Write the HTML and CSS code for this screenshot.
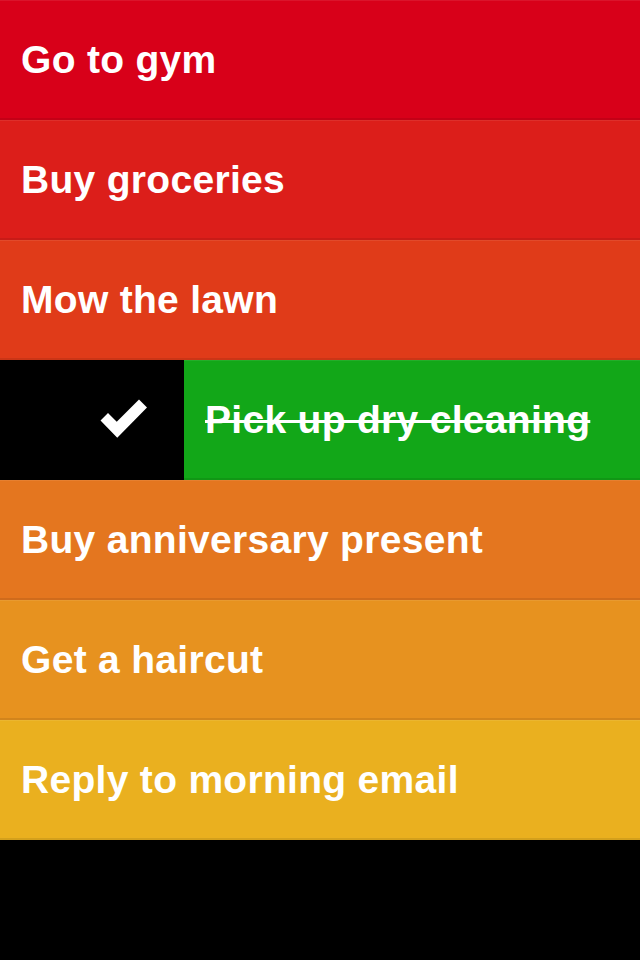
FILE: index.html
```
<!DOCTYPE html>
<html lang="en">
<head>
<meta charset="utf-8">
<title>Tasks</title>
<link rel="stylesheet" href="styles.css">
</head>
<body>
<ul class="list">
  <li class="item c1"><span class="label">Go to gym</span></li>
  <li class="item c2"><span class="label">Buy groceries</span></li>
  <li class="item c3"><span class="label">Mow the lawn</span></li>
  <li class="swipe">
    <div class="reveal">
      <svg class="check" width="50" height="42" viewBox="100 398 50 42" aria-hidden="true">
        <polygon points="101.5,420.5 109,413 117.75,421.75 140,399.5 148,407.5 118.25,437.75" fill="#fff"/>
      </svg>
    </div>
    <div class="item done"><span class="label">Pick up dry cleaning</span></div>
  </li>
  <li class="item c5"><span class="label">Buy anniversary present</span></li>
  <li class="item c6"><span class="label">Get a haircut</span></li>
  <li class="item c7"><span class="label">Reply to morning email</span></li>
</ul>
</body>
</html>
```
FILE: styles.css
```
html, body {
  margin: 0;
  padding: 0;
  background: #000;
}
body {
  width: 640px;
  height: 960px;
  overflow: hidden;
  font-family: "Liberation Sans", Arial, Helvetica, sans-serif;
}
.list {
  list-style: none;
  margin: 0;
  padding: 0;
}
.item {
  height: 120px;
  display: flex;
  align-items: center;
  padding-left: 21px;
  box-sizing: border-box;
  color: #fff;
  box-shadow: inset 0 1px 0 rgba(255,255,255,0.08), inset 0 -2px 0 rgba(0,0,0,0.09);
}
.label {
  font-size: 39px;
  font-weight: bold;
  line-height: 120px;
  white-space: nowrap;
  letter-spacing: 0.3px;
  font-kerning: none;
}
.c1 { background: #d80019; }
.c2 { background: #dc1e1a; }
.c3 { background: #e03b19; }
.c5 { background: #e4761f; }
.c6 { background: #e7921f; }
.c7 { background: #eab01f; }
.swipe {
  display: flex;
  height: 120px;
}
.reveal {
  width: 184px;
  flex: none;
  background: #000;
  display: flex;
  align-items: center;
  justify-content: flex-end;
  padding-right: 35px;
  box-sizing: border-box;
}
.check {
  display: block;
  margin-top: -2px;
}
.done {
  flex: 1;
  background: #12a718;
}
.done .label {
  text-decoration: line-through;
  text-decoration-thickness: 3px;
}
```
